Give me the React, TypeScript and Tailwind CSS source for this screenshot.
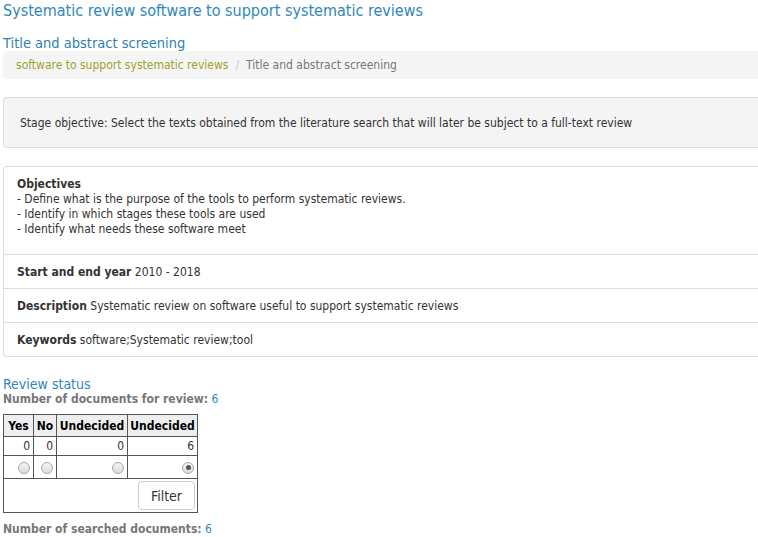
import React from "react";

const font = { fontFamily: '"DejaVu Sans Condensed", "DejaVu Sans", sans-serif' };

function Radio({ checked }: { checked?: boolean }) {
  return (
    <span className="inline-flex h-[12px] w-[12px] items-center justify-center rounded-full border border-[#a9a9a9] bg-gradient-to-b from-[#f4f4f4] to-[#dcdcdc] align-middle">
      {checked && <span className="h-[5px] w-[5px] rounded-full bg-[#555]" />}
    </span>
  );
}

export default function App() {
  return (
    <div className="w-[800px] bg-white pl-[3px] text-[12px] text-[#333]" style={font}>
      <h1 className="pt-[1px] text-[16px] leading-[20px] text-[#2f87b9]">
        Systematic review software to support systematic reviews
      </h1>
      <h2 className="mt-[14px] text-[14.5px] leading-[16px] text-[#2f82b0]">Title and abstract screening</h2>
      <div className="flex h-[28px] items-center rounded-l-[4px] bg-[#f5f5f5] pl-[13px] text-[12px]">
        <span className="text-[#9ea22c]">software to support systematic reviews</span>
        <span className="px-[7px] text-[#cccccc]">/</span>
        <span className="text-[#777]">Title and abstract screening</span>
      </div>
      <div className="mt-[18px] flex h-[51px] items-center rounded-l-[4px] border border-r-0 border-[#dddddd] bg-[#f4f4f4] pl-[16px] text-[#333]">
        Stage objective: Select the texts obtained from the literature search that will later be subject to a full-text review
      </div>
      <div className="mt-[18px] rounded-l-[4px] border border-r-0 border-[#dddddd]">
        <div className="border-b border-[#dddddd] px-[13px] pb-[17px] pt-[10px] leading-[15px]">
          <div className="font-bold">Objectives</div>
          <div>- Define what is the purpose of the tools to perform systematic reviews.</div>
          <div>- Identify in which stages these tools are used</div>
          <div>- Identify what needs these software meet</div>
        </div>
        <div className="flex h-[34px] items-center border-b border-[#dddddd] px-[13px]">
          <b>Start and end year</b>&nbsp;2010 - 2018
        </div>
        <div className="flex h-[34px] items-center border-b border-[#dddddd] px-[13px]">
          <b>Description</b>&nbsp;Systematic review on software useful to support systematic reviews
        </div>
        <div className="flex h-[33px] items-center px-[13px]">
          <b>Keywords</b>&nbsp;software;Systematic review;tool
        </div>
      </div>
      <div className="mt-[19px] text-[14px] leading-[16px] text-[#2f87b9]">Review status</div>
      <div className="text-[12px] leading-[14px] text-[#777]">
        <b>Number of documents for review:</b> <span className="text-[#2f87b9]">6</span>
      </div>
      <table className="mt-[8px] border-collapse border border-[#555] text-[12px] leading-[14px]">
        <thead>
          <tr className="h-[22px] bg-[#eeeeee] text-black">
            <th className="w-[30px] border border-[#555] px-[2px] font-bold">Yes</th>
            <th className="w-[23px] border border-[#555] px-[2px] font-bold">No</th>
            <th className="w-[71px] border border-[#555] px-[2px] font-bold">Undecided</th>
            <th className="w-[70px] border border-[#555] px-[2px] font-bold">Undecided</th>
          </tr>
        </thead>
        <tbody>
          <tr className="h-[19px]">
            <td className="border border-[#555] px-[3px] text-right">0</td>
            <td className="border border-[#555] px-[3px] text-right">0</td>
            <td className="border border-[#555] px-[3px] text-right">0</td>
            <td className="border border-[#555] px-[3px] text-right">6</td>
          </tr>
          <tr className="h-[23px]">
            <td className="border border-[#555] px-[3px] text-right"><Radio /></td>
            <td className="border border-[#555] px-[3px] text-right"><Radio /></td>
            <td className="border border-[#555] px-[3px] text-right"><Radio /></td>
            <td className="border border-[#555] px-[3px] text-right"><Radio checked /></td>
          </tr>
          <tr className="h-[34px]">
            <td colSpan={4} className="border border-[#555] px-[2px] text-right">
              <button className="h-[29px] rounded-[4px] border border-[#cccccc] bg-white px-[12px] text-[14px] text-[#333]">
                Filter
              </button>
            </td>
          </tr>
        </tbody>
      </table>
      <div className="mt-[9px] text-[12px] leading-[14px] text-[#777]">
        <b>Number of searched documents:</b> <span className="text-[#2f87b9]">6</span>
      </div>
    </div>
  );
}
